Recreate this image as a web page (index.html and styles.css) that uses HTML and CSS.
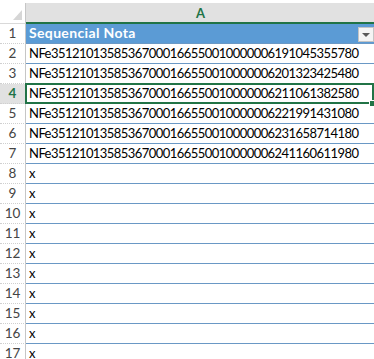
FILE: index.html
```html
<!DOCTYPE html>
<html>
<head>
<meta charset="utf-8">
<link rel="stylesheet" href="styles.css">
</head>
<body>
<div class="sheet">
  <div class="row colrow">
    <div class="corner"><span class="tri"></span></div>
    <div class="colhead">A</div>
  </div>
  <div class="row">
    <div class="rh">1</div>
    <div class="cell hdr"><span class="txt">Sequencial Nota</span><span class="dd"><span class="arrow"></span></span></div>
  </div>
  <div class="row"><div class="rh">2</div><div class="cell"><span class="txt">NFe35121013585367000166550010000006191045355780</span></div></div>
  <div class="row"><div class="rh">3</div><div class="cell"><span class="txt">NFe35121013585367000166550010000006201323425480</span></div></div>
  <div class="row"><div class="rh selrh">4</div><div class="cell sel"><span class="txt">NFe35121013585367000166550010000006211061382580</span><span class="handle"></span></div></div>
  <div class="row"><div class="rh">5</div><div class="cell"><span class="txt">NFe35121013585367000166550010000006221991431080</span></div></div>
  <div class="row"><div class="rh">6</div><div class="cell"><span class="txt">NFe35121013585367000166550010000006231658714180</span></div></div>
  <div class="row"><div class="rh">7</div><div class="cell"><span class="txt">NFe35121013585367000166550010000006241160611980</span></div></div>
  <div class="row"><div class="rh">8</div><div class="cell"><span class="txt">x</span></div></div>
  <div class="row"><div class="rh">9</div><div class="cell"><span class="txt">x</span></div></div>
  <div class="row"><div class="rh">10</div><div class="cell"><span class="txt">x</span></div></div>
  <div class="row"><div class="rh">11</div><div class="cell"><span class="txt">x</span></div></div>
  <div class="row"><div class="rh">12</div><div class="cell"><span class="txt">x</span></div></div>
  <div class="row"><div class="rh">13</div><div class="cell"><span class="txt">x</span></div></div>
  <div class="row"><div class="rh">14</div><div class="cell"><span class="txt">x</span></div></div>
  <div class="row"><div class="rh">15</div><div class="cell"><span class="txt">x</span></div></div>
  <div class="row"><div class="rh">16</div><div class="cell"><span class="txt">x</span></div></div>
  <div class="row"><div class="rh">17</div><div class="cell"><span class="txt">x</span></div></div>
</div>
</body>
</html>
```

FILE: styles.css
```css
* { box-sizing: border-box; }
html, body { margin: 0; padding: 0; background: #fff; overflow: hidden; }
body { font-family: Lato, "Liberation Sans", sans-serif; font-size: 13px; color: #000; }
.sheet { padding-top: 3px; width: 374px; }
.row { display: flex; height: 20px; }
.colrow { height: 21px; }
.corner {
  width: 26px; height: 21px; position: relative;
  border-right: 1px solid #c6c6c6; border-bottom: 1px solid #d9d9d9;
  background: #fff;
}
.tri {
  position: absolute; right: 3px; bottom: 3px; width: 0; height: 0;
  border-left: 9px solid transparent; border-bottom: 10px solid #d6d6d6;
}
.colhead {
  width: 348px; height: 21px; background: #e1e1e1;
  border-bottom: 2px solid #217346;
  color: #217346; font-weight: bold; font-size: 13px;
  display: flex; align-items: center; justify-content: center;
  padding-left: 1px;
}
.rh {
  width: 26px; flex: none;
  border-right: 1px solid #c6c6c6; border-bottom: 1px dotted #d0d0d0;
  color: #444; font-size: 13.5px;
  display: flex; align-items: flex-end; justify-content: center;
  padding-bottom: 2px;
}
.selrh { background: #e1e1e1; color: #217346; font-weight: bold; }
.cell {
  width: 348px; flex: none; position: relative;
  border-bottom: 1px solid #6a98c5;
  display: flex; align-items: flex-end;
  padding: 0 0 2px 3px;
  white-space: nowrap;
}
.txt { letter-spacing: -0.55px; }
.hdr { background: #5b9bd5; color: #fff; font-weight: bold; font-size: 14px; }
.hdr .txt { letter-spacing: 0.35px; }
.dd {
  margin-left: auto; width: 16px; height: 15px; margin-bottom: -1px;
  background: #f4f4f4; border: 1px solid #c4c4c4;
  display: flex; align-items: center; justify-content: center;
}
.arrow {
  width: 0; height: 0;
  border-left: 4px solid transparent; border-right: 4px solid transparent;
  border-top: 4px solid #595959;
}
.sel::after {
  content: ""; position: absolute;
  top: -1px; left: -1px; right: 0; bottom: -1px;
  border: 2px solid #217346;
}
.handle {
  position: absolute; right: -1px; bottom: -3px; width: 5px; height: 5px;
  background: #217346; outline: 1px solid #fff; z-index: 2;
}
```
